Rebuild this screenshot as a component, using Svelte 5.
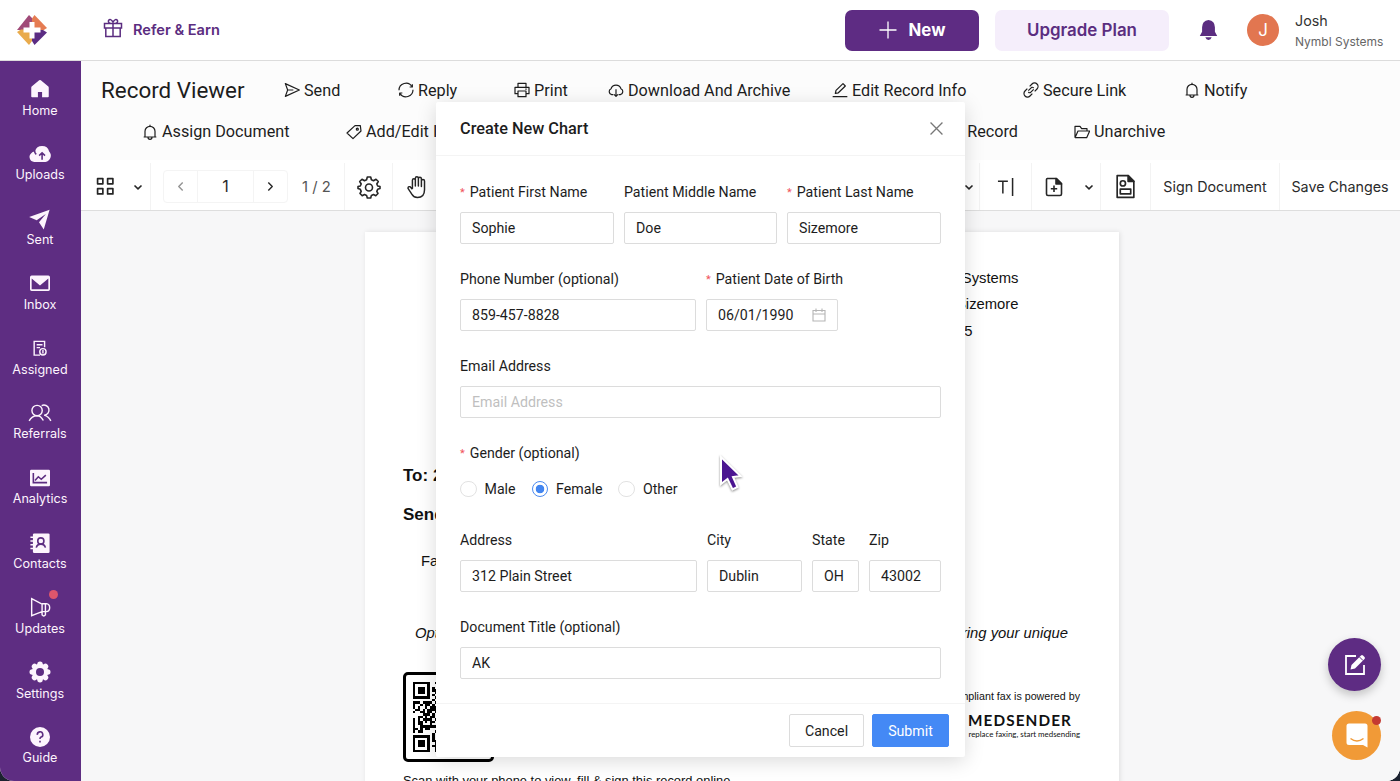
<script>
  const nav = [
    { id: 'home', label: 'Home' },
    { id: 'uploads', label: 'Uploads' },
    { id: 'sent', label: 'Sent' },
    { id: 'inbox', label: 'Inbox' },
    { id: 'assigned', label: 'Assigned' },
    { id: 'referrals', label: 'Referrals' },
    { id: 'analytics', label: 'Analytics' },
    { id: 'contacts', label: 'Contacts' },
    { id: 'updates', label: 'Updates', dot: true },
    { id: 'settings', label: 'Settings' },
    { id: 'guide', label: 'Guide' }
  ];

  const primaryActions = [
    { icon: 'send', label: 'Send' },
    { icon: 'sync', label: 'Reply' },
    { icon: 'print', label: 'Print' },
    { icon: 'cloud', label: 'Download And Archive' },
    { icon: 'edit', label: 'Edit Record Info' },
    { icon: 'link', label: 'Secure Link' },
    { icon: 'bell', label: 'Notify' }
  ];

  const secondaryActions = [
    { icon: 'bell', label: 'Assign Document' },
    { icon: 'tag', label: 'Add/Edit Info' },
    { icon: 'edit', label: 'Delete Record', end: true },
    { icon: 'folder', label: 'Unarchive' }
  ];

  const genders = ['Male', 'Female', 'Other'];

  let form = $state({
    first: 'Sophie',
    middle: 'Doe',
    last: 'Sizemore',
    phone: '859-457-8828',
    dob: '06/01/1990',
    email: '',
    gender: 'Female',
    address: '312 Plain Street',
    city: 'Dublin',
    state: 'OH',
    zip: '43002',
    title: 'AK'
  });

  // QR modules, 29 x 29 with three finder squares
  const size = 29;
  const leftBand = [
    '###.####.',
    '#..#.##.#',
    '#.#..#.##',
    '.##.#.###',
    '#..##.##.',
    '....###.#',
    '..##.#.##',
    '#.#.####.',
    '#.##.#.##',
    '#.##...#.',
    '#..######',
    '##.#.##..',
    '#.##.....'
  ];
  const modules = [];
  function inFinder(x, y) {
    return (x < 8 && y < 8) || (x > 20 && y < 8) || (x < 8 && y > 20);
  }
  let seed = 7;
  for (let y = 0; y < size; y++) {
    for (let x = 0; x < size; x++) {
      seed = (seed * 1103515245 + 12345) % 2147483648;
      if (inFinder(x, y)) continue;
      const row = leftBand[y - 8];
      const on = row && x < row.length ? row[x] === '#' : seed / 2147483648 > 0.42;
      if (on) modules.push([x, y]);
    }
  }
  const finders = [[0, 0], [22, 0], [0, 22]];

  const gearTeeth = [0, 45, 90, 135, 180, 225, 270, 315];
</script>

{#snippet icon(name)}
  <svg class="ico" viewBox="0 0 24 24" fill="none" stroke="currentColor" stroke-width="1.8" stroke-linejoin="round">
    {#if name === 'send'}
      <path d="M2 2.500 L23 12 L2 21.500 L5.500 12 Z M5.500 12 H14" />
    {:else if name === 'sync'}
      <path d="M1.500 12.500 A10.500 10.500 0 0 1 21 7 M22.500 11.500 A10.500 10.500 0 0 1 3 17" />
      <path d="M21.500 3.500 V7.500 H17.500 M2.500 20.500 V16.500 H6.500" />
    {:else if name === 'print'}
      <path d="M6 8 V2 H18 V8 M6 17.500 H1.500 V8 H22.500 V17.500 H18 M6 13.500 H18 V22 H6 Z M17 10.800 H19" />
    {:else if name === 'cloud'}
      <path d="M8 19 H5.500 A4.800 4.800 0 0 1 4.500 10 A8 8 0 0 1 19.500 10 A4.800 4.800 0 0 1 18.500 19 H16 M12 11 V21.500 M9 18.500 L12 21.500 L15 18.500" />
    {:else if name === 'edit'}
      <path d="M5 17 L6 12.500 L16.500 2.500 L20 6 L9.500 16.200 Z M1 22 H23" />
    {:else if name === 'link'}
      <path d="M10 6.500 L13.500 3 A5 5 0 0 1 21 10.500 L17.500 14 M14 17.500 L10.500 21 A5 5 0 0 1 3 13.500 L6.500 10 M8 13 L13 8 A3 3 0 0 1 16 9 M16 11 L11 16 A3 3 0 0 1 8 15" />
    {:else if name === 'bell'}
      <path d="M12 1 V3.500 M2.500 19.500 H21.500 M4.500 19.500 V11 A7.500 7.500 0 0 1 19.500 11 V19.500 M9 20 A3 3 0 0 0 15 20" />
    {:else if name === 'tag'}
      <path d="M1.500 13.500 L13.500 2.500 L21.500 2.500 L22.500 10.500 L10.500 22 Z" />
      <circle cx="17" cy="7.800" r="1.500" />
    {:else if name === 'folder'}
      <path d="M1.500 20.500 V3.500 H9 L11.500 7 H19.500 V10.500 M1.500 20.500 H19 L23.500 10.500 H6 L1.500 20.500" />
    {/if}
  </svg>
{/snippet}

{#snippet navIcon(name)}
  <svg class="nav-ico" viewBox="0 0 24 24" fill="currentColor">
    {#if name === 'home'}
      <path d="M11 1.600 Q12 0.900 13 1.600 L22 9 Q22.500 9.500 22.500 10.500 V21 Q22.500 22 21.500 22 H14.500 V15.500 H9.500 V22 H2.500 Q1.500 22 1.500 21 V10.500 Q1.500 9.500 2 9 Z" />
    {:else if name === 'uploads'}
      <path d="M5 21.500 A6 6 0 0 1 1.500 11 A5 5 0 0 1 6 9 A8.800 8.800 0 0 1 23 9 A7.500 7.500 0 0 1 18.500 21.500 Z" />
      <path class="cut" d="M14.500 19 V11 M11 14 L14.500 10.500 L18 14 M5.500 8 Q5.500 11 7.500 12.500" />
    {:else if name === 'sent'}
      <path d="M-1 9.500 L23.500 1 L16.500 24.500 L10.800 16 L19 6 L8 13.500 Z" />
    {:else if name === 'inbox'}
      <path fill-rule="evenodd" d="M2 3 H22 Q24 3 24 5 V19.500 Q24 21.500 22 21.500 H2 Q0 21.500 0 19.500 V5 Q0 3 2 3 Z M2 6.500 V19.500 H22 V6.500 L12 15 Z" />
    {:else if name === 'assigned'}
      <g class="line">
        <path d="M17.500 11 V4 H5 V20.500 H12 M8 8 H15 M8 11.500 H12" />
        <circle cx="15.500" cy="16.500" r="3.800" />
        <path d="M15.500 14.500 V18.500" />
      </g>
    {:else if name === 'referrals'}
      <g class="line">
        <circle cx="8.500" cy="9" r="6.200" />
        <path d="M-1 21.500 Q2 15.300 8.500 15.300 Q13 15.300 16 21 M14 3.200 A6 6 0 1 1 17 14.500 Q22.500 16 25 21.500" />
      </g>
    {:else if name === 'analytics'}
      <rect x="0" y="2" width="24" height="20" rx="1.500" />
      <path class="cut" d="M4 6 V17.500 H20.500 M6 15 L10 10.500 L13.500 13.500 L19 8.500" />
    {:else if name === 'contacts'}
      <rect x="3.500" y="0.500" width="20" height="23.500" rx="1.500" />
      <path class="line" d="M0.500 5 H4 M0.500 9.500 H4 M0.500 14 H4 M0.500 18.500 H4" />
      <circle class="cut" cx="13" cy="9.500" r="3.700" />
      <path class="cut" d="M7.500 17.500 Q8.500 13.300 13 13.300 Q17.500 13.300 18.500 17.500" />
    {:else if name === 'updates'}
      <path class="line" d="M2 2 L14.500 8.500 V17.500 L2 22.500 Z M14.500 8 H19.500 A4.800 4.800 0 0 1 19.500 17.500 H14.500 M14.500 17.500 V21.500 Q16.500 24 18.500 21.500 V8" />
    {:else if name === 'settings'}
      <circle cx="12" cy="12" r="9.800" />
      {#each gearTeeth as deg}
        <circle cx="12" cy="2.700" r="3.300" transform="rotate({deg} 12 12)" />
      {/each}
      <circle class="hole" cx="12" cy="12" r="4.800" />
    {:else if name === 'guide'}
      <circle cx="12" cy="12" r="12" />
      <path class="cut" d="M8.800 9.500 A3.300 3.300 0 1 1 12.800 12.300 Q12 12.700 12 14.500 M12 16.500 V18.500" />
    {/if}
  </svg>
{/snippet}

{#snippet chevron()}
  <svg class="chev" viewBox="0 0 10 10"><path d="M1.500 3.500 L5 6.800 L8.500 3.500" /></svg>
{/snippet}

<div class="app">
  <header class="topbar">
    <svg class="logo" viewBox="0 0 30 30">
      <path fill="#a04a78" d="M12 0 L15.500 3.500 V15 H0 Z" />
      <path fill="#e57c52" d="M17.500 0 L30 13 L26 15.500 H15 V3.500 Z" />
      <path fill="#5b2c83" d="M30 17.500 L17.500 30 L15 26 V15 H26 Z" />
      <path fill="#e9ab4c" d="M12 30 L0 17 L4 14.500 H15 V26 Z" />
      <path fill="#fff" d="M12.500 7 H17.500 V12.500 H23.500 V17.500 H17.500 V23.500 H12.500 V17.500 H6.500 V12.500 H12.500 Z" />
    </svg>
    <a class="refer" href="#refer">
      <svg viewBox="0 0 20 20" class="gift"><path d="M1.500 5.500 H18.500 V10 H1.500 Z M2.800 10 V18.500 H17.200 V10 M10 5.500 V18.500 M10 5.500 Q4.500 5.500 5.500 2.500 Q7.500 0 10 4 Q12.500 0 14.500 2.500 Q15.500 5.500 10 5.500" /></svg>
      <span>Refer &amp; Earn</span>
    </a>
    <button class="new">
      <svg viewBox="0 0 18 18"><path d="M9 0.500 V17.500 M0.500 9 H17.500" /></svg>
      <span>New</span>
    </button>
    <button class="upgrade">Upgrade Plan</button>
    <svg class="alert" viewBox="0 0 20 24"><path d="M10 1 Q17 2 17 9 V14 L19.500 18.500 H0.500 L3 14 V9 Q3 2 10 1 Z M6.500 20 H13.500 Q12.500 22.800 10 22.800 Q7.500 22.800 6.500 20 Z" /></svg>
    <span class="avatar">J</span>
    <div class="account">
      <span class="who">Josh</span>
      <span class="org">Nymbl Systems</span>
    </div>
  </header>

  <div class="body">
    <nav class="sidebar">
      {#each nav as item}
        <a class="nav-item" href="#{item.id}">
          <span class="nav-pic">
            {@render navIcon(item.id)}
            {#if item.dot}<i class="dot"></i>{/if}
          </span>
          <span>{item.label}</span>
        </a>
      {/each}
    </nav>

    <main>
      <div class="actions first">
        <h1>Record Viewer</h1>
        {#each primaryActions as action}
          <button class="action">{@render icon(action.icon)}{action.label}</button>
        {/each}
      </div>
      <div class="actions second">
        {#each secondaryActions as action}
          <button class="action" class:end={action.end}>{@render icon(action.icon)}{action.label}</button>
        {/each}
      </div>

      <div class="toolbar">
        <div class="tool thumbs">
          <svg class="grid-ico" viewBox="0 0 18 18"><path d="M1.500 1.500 H6.500 V6.500 H1.500 Z M11 1.500 H16 V6.500 H11 Z M1.500 11 H6.500 V16 H1.500 Z M11 11 H16 V16 H11 Z" /></svg>
          {@render chevron()}
        </div>
        <div class="tool pager">
          <div class="stepper">
            <span class="step off"><svg viewBox="0 0 8 12"><path d="M6.500 1.500 L2 6 L6.500 10.500" /></svg></span>
            <span class="page-no">1</span>
            <span class="step"><svg viewBox="0 0 8 12"><path d="M1.500 1.500 L6 6 L1.500 10.500" /></svg></span>
          </div>
          <span class="count">1 / 2</span>
        </div>
        <div class="tool cog">
          <svg viewBox="0 0 24 24">
            <path d="M10.300 2 H13.700 L14.400 4.800 L16.500 5.700 L19 4.200 L21.300 6.500 L19.800 9 L20.700 11 L23 11.500 V13.500 L20.700 14.300 L19.800 16.300 L21 18.500 L18.800 20.700 L16.500 19.500 L14.400 20.400 L13.700 23 H10.300 L9.600 20.400 L7.500 19.500 L5.200 20.700 L3 18.500 L4.200 16.300 L3.300 14.300 L1 13.500 V11.500 L3.300 11 L4.200 9 L2.700 6.500 L5 4.200 L7.500 5.700 L9.600 4.800 Z" />
            <circle cx="12" cy="12.500" r="3.500" />
          </svg>
        </div>
        <div class="tool hand">
          <svg viewBox="0 0 24 26"><path d="M7 15 V5.500 A1.600 1.600 0 0 1 10.200 5.500 V12 V3.500 A1.600 1.600 0 0 1 13.500 3.500 V12 V4 A1.600 1.600 0 0 1 16.800 4 V12.500 V6.500 A1.600 1.600 0 0 1 20.200 6.500 V16 Q20.200 24.500 12.500 24.500 Q8.500 24.500 6.500 21 L2.200 14.500 Q2.200 12 4.500 12.800 L7 15.500" /></svg>
        </div>
        <div class="tool hidden-tools">{@render chevron()}</div>
        <div class="tool text-tool"><svg viewBox="0 0 18 20"><path d="M1 4 H11.500 M6.200 4 V17 M16.500 0.500 V19.500" /></svg></div>
        <div class="tool add-file">
          <svg viewBox="0 0 18 20"><path d="M2 1.500 H11.500 L16.500 6.500 V17 Q16.500 18.500 15 18.500 H3 Q1.500 18.500 1.500 17 V2.500 Q1.500 1.500 2.500 1.500 M9 8.500 V15 M5.800 11.800 H12.200" /><path class="solid" d="M11 1.500 V7 H16.500 Z" /></svg>
          {@render chevron()}
        </div>
        <div class="tool stamp">
          <svg viewBox="0 0 18 24"><path d="M1 1.500 H11.500 L17 7 V22.500 H1 Z M4 14.500 H14 V19 H4 Z" /><circle cx="6.500" cy="9" r="2.500" /><path class="solid" d="M11.500 1.500 V7 H17 Z" /></svg>
        </div>
        <div class="tool label">Sign Document</div>
        <div class="tool label last">Save Changes</div>
      </div>

      <div class="viewer">
        <div class="page">
          <div class="from">
            <span>Nymbl Systems</span>
            <span>Sophie Sizemore</span>
            <span class="code">12345</span>
          </div>
          <p class="to">To: 2125550100</p>
          <p class="sender">Sender: Nymbl</p>
          <p class="fax">Fax number</p>
          <div class="note"><span>Optional</span><span>entering your unique</span></div>
          <div class="foot">
            <div class="qr">
              <svg viewBox="0 0 29 29" shape-rendering="crispEdges">
                {#each modules as [x, y]}<rect {x} {y} width="1" height="1" />{/each}
                {#each finders as [x, y]}
                  <path fill-rule="evenodd" d="M{x} {y} h7 v7 h-7 Z m1 1 v5 h5 v-5 Z" />
                  <rect x={x + 2} y={y + 2} width="3" height="3" />
                {/each}
              </svg>
            </div>
            <div class="brand">
              <span class="powered">HIPAA compliant fax is powered by</span>
              <span class="mark">MEDSENDER</span>
              <span class="tagline">replace faxing, start medsending</span>
            </div>
          </div>
          <p class="scan">Scan with your phone to view, fill &amp; sign this record online.</p>
        </div>
      </div>
    </main>
  </div>

  <section class="modal">
    <div class="modal-head">
      <h2>Create New Chart</h2>
      <svg viewBox="0 0 12 12"><path d="M0.500 0.500 L11.500 11.500 M11.500 0.500 L0.500 11.500" /></svg>
    </div>
    <div class="modal-body">
      <div class="row names">
        <label><span class="req">Patient First Name</span><input bind:value={form.first} /></label>
        <label><span>Patient Middle Name</span><input bind:value={form.middle} /></label>
        <label><span class="req">Patient Last Name</span><input bind:value={form.last} /></label>
      </div>
      <div class="row contact">
        <label><span>Phone Number (optional)</span><input bind:value={form.phone} /></label>
        <label>
          <span class="req">Patient Date of Birth</span>
          <div class="date">
            <input bind:value={form.dob} />
            <svg viewBox="0 0 14 14"><path d="M1 2.500 H13 V13 H1 Z M1 6 H13 M4 0.500 V4 M10 0.500 V4" /></svg>
          </div>
        </label>
      </div>
      <div class="row">
        <label><span>Email Address</span><input placeholder="Email Address" bind:value={form.email} /></label>
      </div>
      <div class="gender">
        <span class="req">Gender (optional)</span>
        <div class="radios">
          {#each genders as g}
            <button class="radio" class:on={form.gender === g} onclick={() => (form.gender = g)}>
              <i></i>{g}
            </button>
          {/each}
        </div>
      </div>
      <div class="row place">
        <label><span>Address</span><input bind:value={form.address} /></label>
        <label><span>City</span><input bind:value={form.city} /></label>
        <label><span>State</span><input bind:value={form.state} /></label>
        <label><span>Zip</span><input bind:value={form.zip} /></label>
      </div>
      <div class="row">
        <label><span>Document Title (optional)</span><input bind:value={form.title} /></label>
      </div>
    </div>
    <div class="modal-foot">
      <button class="btn">Cancel</button>
      <button class="btn primary">Submit</button>
    </div>
  </section>

  <svg class="pointer" viewBox="0 0 24 38"><path d="M2 3 V30 L8.500 25 L13.500 35.500 L18.500 33 L14 23 L21.500 22 Z" /></svg>

  <button class="fab compose" aria-label="Compose">
    <svg viewBox="0 0 22 22"><path class="frame" d="M12 2 H2 V20 H20 V11" /><path d="M6.500 15.500 L7.500 11 L17 1.500 Q18 0.500 19 1.500 L20.500 3 Q21.500 4 20.500 5 L11 14.500 Z" /><path class="nick" d="M15.500 3 L19 6.500" /></svg>
  </button>
  <button class="fab chat" aria-label="Chat">
    <svg viewBox="0 0 22 25"><path d="M3 0.500 H19 Q21.500 0.500 21.500 3 V24.500 L17 22 H3 Q0.500 22 0.500 19.500 V3 Q0.500 0.500 3 0.500 Z" /><path class="smile" d="M4.500 15.500 Q11 20.500 17.500 15.500" /></svg>
    <i class="badge"></i>
  </button>
</div>

<style>
  :global(body) {
    background: #1c2230;
    overflow: hidden;
  }

  .app {
    position: relative;
    width: 1400px;
    height: 781px;
    display: flex;
    flex-direction: column;
    overflow: hidden;
    border-radius: 0 0 14px 14px;
    background: #fff;
    font-family: Roboto, sans-serif;
    color: #1d1d1d;
  }

  svg {
    display: block;
    flex: none;
  }

  button {
    border: none;
    background: none;
    padding: 0;
    font: inherit;
    color: inherit;
  }

  a {
    color: inherit;
    text-decoration: none;
  }

  /* top bar */
  .topbar {
    flex: none;
    height: 61px;
    box-sizing: border-box;
    display: flex;
    align-items: center;
    padding-left: 17px;
    border-bottom: 1px solid #dcdcdc;
    font-family: Inter, sans-serif;
  }

  .logo {
    width: 30px;
    height: 30px;
  }

  .refer {
    display: flex;
    align-items: center;
    gap: 10px;
    margin-left: 56px;
    width: 742px;
    color: #5b2d80;
    font-size: 14.6px;
    font-weight: 600;
  }

  .gift {
    width: 20px;
    height: 20px;
    margin-top: -4px;
    fill: none;
    stroke: #5b2d80;
    stroke-width: 1.5;
  }

  .new {
    width: 134px;
    height: 41px;
    display: flex;
    align-items: center;
    justify-content: center;
    gap: 12px;
    border-radius: 7px;
    background: #5e2c83;
    color: #fff;
    font-size: 16.8px;
    font-weight: 700;
  }

  .new svg {
    width: 18px;
    height: 18px;
    stroke: #fff;
    stroke-width: 1.3;
  }

  .upgrade {
    width: 174px;
    height: 41px;
    margin-left: 16px;
    border-radius: 7px;
    background: #f5eefb;
    color: #5b2d80;
    font-size: 16.9px;
    font-weight: 600;
  }

  .alert {
    width: 19px;
    height: 22px;
    margin-left: 30px;
    fill: #5b2d80;
  }

  .avatar {
    width: 32px;
    height: 32px;
    margin-left: 29px;
    border-radius: 50%;
    background: #e27650;
    color: #fff;
    font-size: 17px;
    line-height: 32px;
    text-align: center;
  }

  .account {
    display: flex;
    flex-direction: column;
    gap: 5px;
    margin: 1px 0 0 16px;
  }

  .who {
    font-size: 14.3px;
    line-height: 17px;
    color: #333;
  }

  .org {
    font-size: 12px;
    line-height: 16px;
    color: #666;
  }

  .body {
    flex: 1;
    min-height: 0;
    display: flex;
  }

  /* sidebar */
  .sidebar {
    flex: none;
    width: 81px;
    padding: 17px 1px 0 0;
    box-sizing: border-box;
    background: #5e2d82;
    font-family: Inter, sans-serif;
    color: #fdf4fd;
  }

  .nav-item {
    height: 64.8px;
    display: flex;
    flex-direction: column;
    align-items: center;
    gap: 1.5px;
    font-size: 12.6px;
    line-height: 17px;
  }

  .nav-pic {
    position: relative;
    height: 22px;
    display: flex;
    align-items: center;
  }

  .nav-ico {
    width: 20px;
    height: 20px;
    overflow: visible;
  }

  .line {
    fill: none;
    stroke: currentColor;
    stroke-width: 1.7;
  }

  .cut {
    fill: none;
    stroke: #5e2d82;
    stroke-width: 1.9;
  }

  .hole {
    fill: #5e2d82;
  }

  .dot {
    position: absolute;
    right: -8px;
    top: -6px;
    width: 9px;
    height: 9px;
    border-radius: 50%;
    background: #dd566c;
  }

  main {
    flex: 1;
    min-width: 0;
    display: flex;
    flex-direction: column;
    background: #fcfcfc;
  }

  /* record actions */
  .actions {
    display: grid;
    align-items: center;
    height: 42px;
    font-size: 16.2px;
  }

  .first {
    grid-template-columns: 183px 114px 116px 94px 224px 191px 161px 1fr;
    padding: 8px 0 0 20px;
  }

  .second {
    grid-template-columns: 204px 471px 257px 1fr;
    height: 41px;
    padding-left: 61px;
  }

  h1 {
    margin: 0;
    font-size: 22.4px;
    font-weight: 400;
    white-space: nowrap;
  }

  .action {
    display: flex;
    align-items: center;
    gap: 4px;
    white-space: nowrap;
  }

  .action.end {
    justify-self: start;
    width: 201px;
    justify-content: flex-end;
  }

  .ico {
    width: 16px;
    height: 16px;
  }

  /* viewer toolbar */
  .toolbar {
    flex: none;
    display: flex;
    height: 51px;
    box-sizing: border-box;
    margin-top: 8px;
    padding: 3px 0 0;
    border-bottom: 1px solid #dedede;
    background: #fff;
    font-family: Inter, sans-serif;
    font-size: 14.3px;
    color: #2b2b2b;
  }

  .tool {
    display: flex;
    align-items: center;
    box-sizing: border-box;
    border-right: 1px solid #f3f3f3;
    flex: none;
  }

  .tool svg {
    fill: none;
    stroke: #262626;
    stroke-width: 1.6;
    stroke-linejoin: round;
  }

  .tool .solid {
    fill: #262626;
  }

  .tool .chev {
    width: 10px;
    height: 10px;
  }

  .thumbs {
    width: 70px;
    padding-left: 15px;
    gap: 18px;
  }

  .grid-ico {
    width: 19px;
    height: 19px;
  }

  .pager {
    width: 194px;
    padding-left: 12px;
  }

  .stepper {
    display: flex;
    height: 33px;
    box-sizing: border-box;
    border: 1px solid #f4f4f4;
    border-radius: 4px;
  }

  .step {
    width: 33px;
    display: flex;
    align-items: center;
    justify-content: center;
  }

  .step svg {
    width: 7px;
    height: 11px;
  }

  .step.off {
    opacity: 0.5;
  }

  .page-no {
    width: 57px;
    box-sizing: border-box;
    border: solid #f4f4f4;
    border-width: 0 1px;
    line-height: 31px;
    text-align: center;
    font-size: 16px;
  }

  .count {
    margin-left: 14px;
    color: #555;
    font-size: 14.8px;
  }

  .cog {
    width: 48px;
    justify-content: center;
  }

  .cog svg {
    width: 24px;
    height: 24px;
  }

  .hand {
    width: 48px;
    justify-content: center;
  }

  .hand svg {
    width: 22px;
    height: 24px;
  }

  .hidden-tools {
    width: 539px;
    padding-right: 5px;
    justify-content: flex-end;
  }

  .text-tool {
    width: 52px;
    justify-content: center;
  }

  .text-tool svg {
    width: 17px;
    height: 20px;
  }

  .add-file {
    width: 69px;
    padding-left: 13px;
    gap: 21px;
  }

  .add-file svg:first-child {
    width: 18px;
    height: 20px;
  }

  .stamp {
    width: 50px;
    justify-content: center;
  }

  .stamp svg {
    width: 19px;
    height: 25px;
  }

  .label {
    width: 129px;
    justify-content: center;
    white-space: nowrap;
  }

  .label.last {
    width: 120px;
    border: none;
  }

  /* document */
  .viewer {
    flex: 1;
    min-height: 0;
    overflow: hidden;
    display: flex;
    padding: 21px 0 0 284px;
    background: #f7f7f8;
  }

  .page {
    width: 754px;
    height: 600px;
    box-sizing: border-box;
    padding: 33px 37px 0 38px;
    background: #fff;
    box-shadow: 1px 0 5px rgba(0, 0, 0, 0.1);
    font-family: "Liberation Sans", sans-serif;
    font-size: 14.8px;
    color: #111;
    white-space: nowrap;
  }

  .page p {
    margin: 0;
  }

  .from {
    display: flex;
    flex-direction: column;
    align-items: flex-end;
    padding-right: 63.5px;
    line-height: 26.4px;
  }

  .code {
    padding-right: 46px;
  }

  .page .to {
    margin-top: 122px;
    font-size: 17px;
    font-weight: 700;
    line-height: 20px;
  }

  .page .sender {
    margin-top: 19px;
    font-size: 17px;
    font-weight: 700;
    line-height: 20px;
  }

  .page .fax {
    margin: 26px 0 0 18px;
    line-height: 20px;
  }

  .note {
    display: flex;
    justify-content: space-between;
    margin-top: 52px;
    padding: 0 14px 0 12px;
    font-style: italic;
    line-height: 20px;
  }

  .foot {
    display: flex;
    justify-content: space-between;
    margin-top: 29px;
  }

  .qr {
    width: 91px;
    height: 90px;
    box-sizing: border-box;
    border: 3px solid #000;
    border-radius: 5px;
    padding: 7px;
  }

  .qr svg {
    width: 70px;
    height: 70px;
  }

  .brand {
    display: flex;
    flex-direction: column;
    align-items: flex-end;
    padding: 18px 2px 0 0;
    font-family: Lato, sans-serif;
  }

  .powered {
    font-family: "Liberation Sans", sans-serif;
    font-size: 10.7px;
    line-height: 13px;
  }

  .mark {
    margin: 8px 8px 0 0;
    font-size: 15.3px;
    font-weight: 700;
    line-height: 18px;
    letter-spacing: 1.1px;
  }

  .tagline {
    font-size: 7.9px;
    line-height: 10px;
  }

  .page .scan {
    margin-top: 10px;
    font-size: 12.9px;
    line-height: 18px;
  }

  /* modal */
  .modal {
    position: absolute;
    left: 436px;
    top: 102px;
    width: 529px;
    height: 655px;
    display: flex;
    flex-direction: column;
    border-radius: 2px;
    background: #fff;
    box-shadow: 0 4px 20px rgba(0, 0, 0, 0.15);
    font-size: 14.2px;
  }

  .modal-head {
    flex: none;
    height: 54px;
    box-sizing: border-box;
    display: flex;
    align-items: center;
    justify-content: space-between;
    padding: 0 22px 0 24px;
    border-bottom: 1px solid #f4f4f4;
  }

  .modal-head svg {
    width: 13px;
    height: 13px;
    stroke: #777;
    stroke-width: 1.2;
  }

  h2 {
    margin: 0;
    font-size: 16.3px;
    font-weight: 500;
  }

  .modal-body {
    flex: 1;
    min-height: 0;
    padding: 25px 24px 0;
  }

  .row {
    display: grid;
    column-gap: 10px;
    height: 87.1px;
    align-items: start;
  }

  .names {
    grid-template-columns: 154px 153px 154px;
  }

  .contact {
    grid-template-columns: 236px 132px;
  }

  .place {
    grid-template-columns: 237px 95px 47px 72px;
  }

  .row label {
    display: flex;
    flex-direction: column;
    gap: 9px;
    line-height: 22px;
    white-space: nowrap;
  }

  input {
    width: 100%;
    height: 32px;
    box-sizing: border-box;
    padding: 0 11px;
    border: 1px solid #dcdcdc;
    border-radius: 2px;
    outline: none;
    background: #fff;
    font: inherit;
    color: #1d1d1d;
  }

  input::placeholder {
    color: #bfbfbf;
    opacity: 1;
  }

  .req::before {
    content: '*';
    margin-right: 5px;
    font-size: 11px;
    line-height: 0;
    vertical-align: 1px;
    color: #f0525a;
  }

  .date {
    position: relative;
    display: flex;
  }

  .date svg {
    position: absolute;
    right: 12px;
    top: 9px;
    width: 14px;
    height: 14px;
    fill: none;
    stroke: #b5b5b5;
    stroke-width: 1.1;
  }

  .gender {
    height: 87.1px;
    line-height: 22px;
  }

  .radios {
    display: flex;
    gap: 16px;
    margin-top: 13.5px;
  }

  .radio {
    display: flex;
    align-items: center;
    gap: 8px;
    line-height: 22px;
  }

  .radio i {
    width: 16.5px;
    height: 16.5px;
    box-sizing: border-box;
    border: 1px solid #e2e2e2;
    border-radius: 50%;
  }

  .radio.on i {
    border-color: #4a8af0;
    background: radial-gradient(circle, #4285f0 0 4px, #fff 4.6px);
  }

  .modal-foot {
    flex: none;
    height: 54px;
    box-sizing: border-box;
    display: flex;
    align-items: center;
    justify-content: flex-end;
    gap: 8px;
    padding-right: 16px;
    border-top: 1px solid #f4f4f4;
  }

  .btn {
    width: 75px;
    height: 33px;
    box-sizing: border-box;
    border: 1px solid #dcdcdc;
    border-radius: 2px;
  }

  .btn.primary {
    width: 77px;
    border-color: #4489f5;
    background: #4489f5;
    color: #fff;
  }

  .pointer {
    position: absolute;
    left: 719px;
    top: 454px;
    width: 24px;
    height: 38px;
    overflow: visible;
    fill: #4b1591;
    stroke: #fff;
    stroke-width: 2;
    filter: drop-shadow(0 1px 1px rgba(0, 0, 0, 0.45));
  }

  .fab {
    position: absolute;
    display: flex;
    align-items: center;
    justify-content: center;
    border-radius: 50%;
  }

  .compose {
    left: 1328px;
    top: 638px;
    width: 53px;
    height: 53px;
    background: #5e2c83;
    box-shadow: 0 4px 10px rgba(0, 0, 0, 0.22);
  }

  .compose svg {
    width: 22px;
    height: 22px;
    fill: #fff;
  }

  .compose .frame {
    fill: none;
    stroke: #fff;
    stroke-width: 1.8;
  }

  .nick {
    stroke: #5e2c83;
    stroke-width: 1;
  }

  .chat {
    left: 1332px;
    top: 711px;
    width: 49px;
    height: 49px;
    background: #f19a37;
  }

  .chat svg {
    width: 22px;
    height: 25px;
    fill: #fff;
  }

  .chat .smile {
    fill: none;
    stroke: #f19a37;
    stroke-width: 1.5;
  }

  .badge {
    position: absolute;
    right: 0;
    top: 5px;
    width: 9px;
    height: 9px;
    border-radius: 50%;
    background: #c43a32;
  }
</style>
